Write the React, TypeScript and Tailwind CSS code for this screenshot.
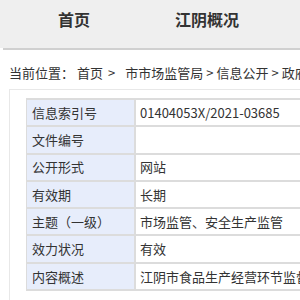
import React from "react";

const rows: [string, string][] = [
  ["信息索引号", "01404053X/2021-03685"],
  ["文件编号", ""],
  ["公开形式", "网站"],
  ["有效期", "长期"],
  ["主题（一级）", "市场监管、安全生产监管"],
  ["效力状况", "有效"],
  ["内容概述", "江阴市食品生产经营环节监督检查"],
];

export default function App() {
  return (
    <div
      className="w-[300px] h-[300px] overflow-hidden bg-white text-[#333]"
      style={{ fontFamily: '"Noto Sans CJK SC", "Noto Sans", sans-serif' }}
    >
      <div className="h-[48px] bg-[#efefef] flex items-start">
        <div className="w-[148px] flex justify-center pt-[8px] text-[16px] font-bold leading-[22px]">首页</div>
        <div className="w-[118px] flex justify-center pt-[8px] text-[16px] font-bold leading-[22px] whitespace-nowrap">江阴概况</div>
      </div>
      <div className="ml-[3px] h-[2px] bg-[#d0d0d0]" />
      <div className="pl-[9px] pt-[14px] h-[39px] text-[13px] leading-[18px] whitespace-nowrap">
        当前位置：<span className="ml-[3px]">首页</span>
        <span className="mx-[5px]">&gt;</span>
        <span className="ml-[5px]">市市场监管局</span>
        <span className="mx-[3px]">&gt;</span>
        信息公开
        <span className="mx-[3px]">&gt;</span>
        政府信息公开
      </div>
      <div className="ml-[9px] w-[400px] h-[220px] border border-[#e8e8e8] pl-[16px] pt-[8px]">
        <div className="border-t-2 border-l border-[#dcdcdc]">
          {rows.map(([k, v]) => (
            <div key={k} className="flex h-[27.3px] border-b-2 border-[#dcdcdc] text-[13px]">
              <div className="w-[109px] shrink-0 bg-[#e7edfb] border-r-2 border-[#dcdcdc] pl-[5px] flex items-center whitespace-nowrap">
                {k}
              </div>
              <div className="flex-1 pl-[4px] flex items-center whitespace-nowrap">{v}</div>
            </div>
          ))}
        </div>
      </div>
    </div>
  );
}
